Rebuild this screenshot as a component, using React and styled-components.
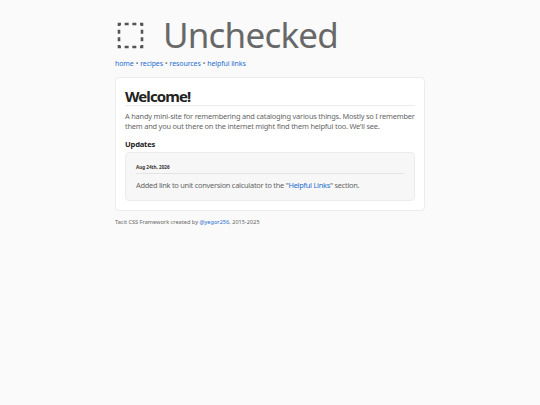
import React from "react";
import styled, { createGlobalStyle } from "styled-components";

const Global = createGlobalStyle`
  html, body {
    margin: 0;
    padding: 0;
    background: #fafafa;
    font-family: "Noto Sans", "Open Sans", sans-serif;
    color: #444;
  }
  a {
    color: #1f6fd0;
    text-decoration: none;
  }
`;

const Page = styled.div`
  width: 310px;
  margin: 0 auto;
  padding-top: 14px;
`;

const Header = styled.header`
  display: flex;
  align-items: center;
  gap: 19px;
  padding-left: 2px;
  height: 42px;
`;

const Title = styled.h1`
  margin: 0;
  font-size: 35px;
  font-weight: 400;
  color: #686868;
  line-height: 42px;
  letter-spacing: -0.8px;
`;

const Nav = styled.nav`
  margin-top: 3px;
  font-size: 7px;
  line-height: 10px;
  letter-spacing: -0.1px;
  color: #777;
  span {
    margin: 0 2px;
  }
`;

const Card = styled.main`
  margin-top: 8px;
  background: #fff;
  border: 1px solid #ececec;
  border-radius: 4px;
  padding: 9px 9px 9px;
`;

const Heading = styled.h2`
  margin: 0;
  font-size: 15px;
  font-weight: 700;
  color: #222;
  line-height: 18px;
  letter-spacing: -0.9px;
  border-bottom: 1px solid #ececec;
`;

const Lead = styled.p`
  margin: 5px 0 0;
  font-size: 7.4px;
  line-height: 10px;
  letter-spacing: -0.2px;
  color: #666;
`;

const SubHeading = styled.h3`
  margin: 7px 0 0;
  font-size: 7.6px;
  font-weight: 700;
  color: #222;
  line-height: 12px;
  letter-spacing: -0.2px;
`;

const Update = styled.section`
  margin-top: 2px;
  background: #f7f7f7;
  border: 1px solid #ececec;
  border-radius: 4px;
  padding: 10px 10px 9px;
`;

const UpdateDate = styled.div`
  font-size: 4.6px;
  font-weight: 700;
  color: #333;
  line-height: 8px;
  padding-bottom: 2px;
  border-bottom: 1px solid #e4e4e4;
`;

const UpdateText = styled.p`
  margin: 5px 0 0;
  font-size: 7.4px;
  line-height: 12px;
  letter-spacing: -0.25px;
  color: #666;
`;

const Footer = styled.footer`
  margin-top: 7px;
  font-size: 5.6px;
  line-height: 8px;
  color: #666;
`;

function Logo() {
  return (
    <svg width="27" height="27" viewBox="0 0 27 27">
      <rect
        x="2"
        y="2"
        width="23"
        height="23"
        fill="none"
        stroke="#555"
        strokeWidth="2.6"
        strokeDasharray="4 3.67"
        strokeDashoffset="2"
      />
    </svg>
  );
}

export default function App() {
  return (
    <>
      <Global />
      <Page>
        <Header>
          <Logo />
          <Title>Unchecked</Title>
        </Header>
        <Nav>
          <a href="#">home</a>
          <span>•</span>
          <a href="#">recipes</a>
          <span>•</span>
          <a href="#">resources</a>
          <span>•</span>
          <a href="#">helpful links</a>
        </Nav>
        <Card>
          <Heading>Welcome!</Heading>
          <Lead>
            A handy mini-site for remembering and cataloging various things.
            Mostly so I remember them and you out there on the internet might
            find them helpful too. We'll see.
          </Lead>
          <SubHeading>Updates</SubHeading>
          <Update>
            <UpdateDate>Aug 24th, 2026</UpdateDate>
            <UpdateText>
              Added link to unit conversion calculator to the "
              <a href="#">Helpful Links</a>" section.
            </UpdateText>
          </Update>
        </Card>
        <Footer>
          Tacit CSS Framework created by <a href="#">@yegor256</a>, 2015-2025
        </Footer>
      </Page>
    </>
  );
}
